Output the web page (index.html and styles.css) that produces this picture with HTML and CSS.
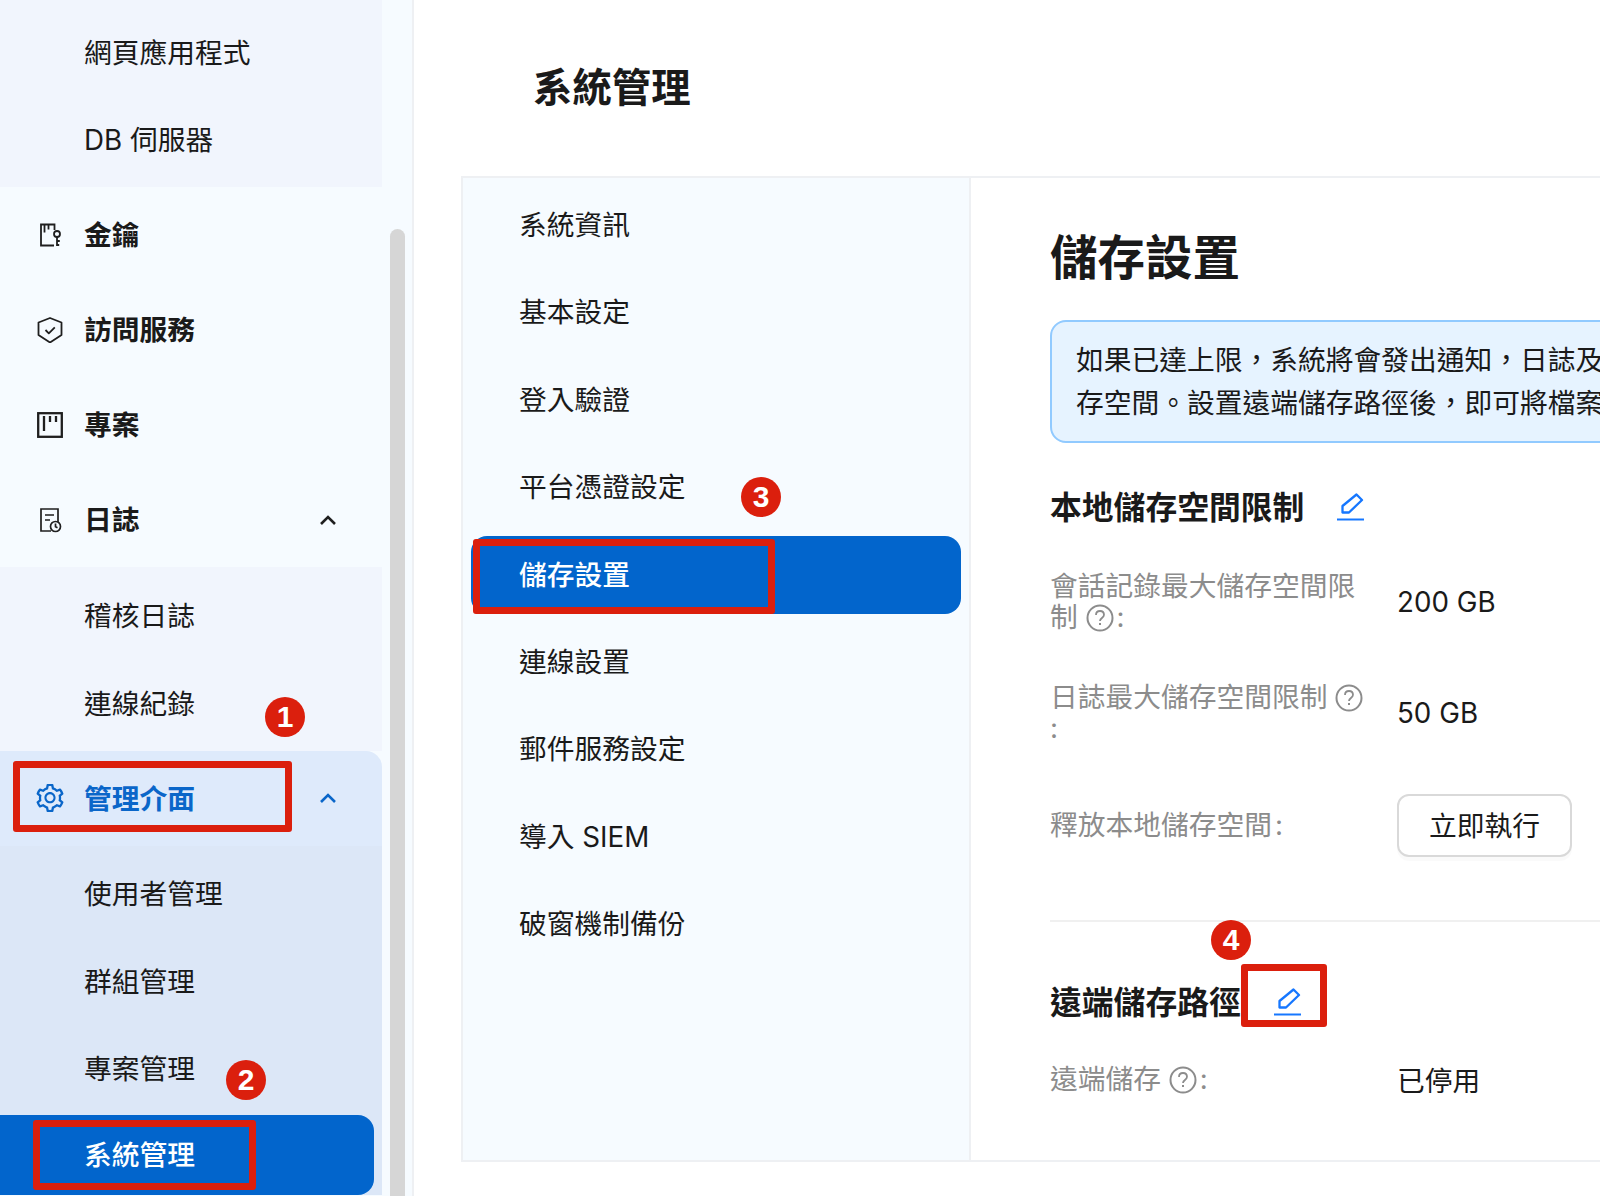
FILE: index.html
```html
<!DOCTYPE html>
<html lang="zh-Hant">
<head>
<meta charset="utf-8">
<title>系統管理</title>
<link rel="stylesheet" href="styles.css">
</head>
<body>
<div class="page">
  <aside class="sidebar">
    <nav class="nav">
      <div class="sub sub-first">
        <div class="sub-item">網頁應用程式</div>
        <div class="sub-item">DB 伺服器</div>
      </div>
      <div class="top-item">
        <svg class="icon" viewBox="0 0 26 26" fill="none" stroke="#1f1f1f" stroke-width="1.8"><path d="M17.500 8V2.500H4v21h13"/><path d="M7.500 2.500v8M11.500 2.500v5"/><circle cx="20" cy="12" r="3"/><path d="M20 15v9M20 19h2.800M20 23h2.200"/></svg>
        <span class="top-label">金鑰</span>
      </div>
      <div class="top-item">
        <svg class="icon" viewBox="0 0 26 26" fill="none" stroke="#1f1f1f" stroke-width="1.800" stroke-linejoin="round"><path d="M13 1 24.500 5.500v12.500L13 25.500 1.500 18V5.500z"/><path d="m8.500 13 3.300 3.300 6-6"/></svg>
        <span class="top-label">訪問服務</span>
      </div>
      <div class="top-item">
        <svg class="icon" viewBox="0 0 26 26" fill="none" stroke="#1f1f1f" stroke-width="2.300"><rect x="1.200" y="1.200" width="23.600" height="23.600"/><path d="M7 4v15M13 4v6M19 4v6"/></svg>
        <span class="top-label">專案</span>
      </div>
      <div class="top-item">
        <svg class="icon" viewBox="0 0 26 26" fill="none" stroke="#1f1f1f" stroke-width="1.700"><path d="M14 24H4V2h17v13"/><path d="M8 8h9M8 13h5"/><circle cx="18.500" cy="19.500" r="5"/><path d="M18.500 16.500v3.200l2 1"/></svg>
        <span class="top-label">日誌</span>
        <svg class="chevron" viewBox="0 0 18 12" fill="none" stroke="#1f1f1f" stroke-width="2.600"><path d="m2 10 7-7 7 7"/></svg>
      </div>
      <div class="sub sub-logs">
        <div class="sub-item">稽核日誌</div>
        <div class="sub-item">連線紀錄</div>
      </div>
      <div class="group">
        <div class="top-item top-active">
          <svg class="icon gear" viewBox="70 70 884 884" fill="#0a66c9"><path d="M924.8 625.7l-65.5-56c3.100-19 4.700-38.400 4.700-57.800s-1.600-38.800-4.700-57.800l65.500-56a32.030 32.030 0 0 0 9.300-35.200l-.9-2.600a443.740 443.740 0 0 0-79.700-137.900l-1.800-2.100a32.120 32.120 0 0 0-35.100-9.500l-81.300 28.900c-30-24.600-63.500-44-99.700-57.600l-15.700-85a32.050 32.050 0 0 0-25.800-25.700l-2.700-.5c-52.100-9.400-106.900-9.400-159 0l-2.700.5a32.050 32.050 0 0 0-25.800 25.700l-15.800 85.400a351.860 351.860 0 0 0-99 57.400l-81.900-29.100a32 32 0 0 0-35.100 9.500l-1.800 2.100a446.020 446.020 0 0 0-79.700 137.900l-.9 2.600c-4.500 12.500-.8 26.500 9.300 35.200l66.300 56.600c-3.100 18.800-4.600 38-4.600 57.100 0 19.200 1.500 38.400 4.600 57.100L99 625.500a32.030 32.030 0 0 0-9.300 35.200l.9 2.600c18.100 50.400 44.900 96.900 79.700 137.900l1.800 2.100a32.120 32.120 0 0 0 35.100 9.500l81.900-29.100c29.800 24.500 63.100 43.900 99 57.400l15.800 85.400a32.050 32.050 0 0 0 25.800 25.700l2.700.5a449.400 449.400 0 0 0 159 0l2.700-.5a32.050 32.050 0 0 0 25.800-25.700l15.700-85a350 350 0 0 0 99.700-57.600l81.300 28.900a32 32 0 0 0 35.100-9.500l1.800-2.100c34.800-41.100 61.600-87.500 79.700-137.900l.9-2.600c4.500-12.300.8-26.300-9.300-35zM788.300 465.900c2.500 15.100 3.800 30.600 3.800 46.100s-1.300 31-3.800 46.100l-6.600 40.100 74.700 63.900a370.030 370.030 0 0 1-42.600 73.600L721 702.800l-31.400 25.800c-23.900 19.600-50.500 35-79.300 45.800l-38.100 14.300-17.900 97a377.500 377.500 0 0 1-85 0l-17.900-97.200-37.800-14.500c-28.500-10.800-55-26.200-78.700-45.700l-31.400-25.900-93.400 33.200c-17-22.900-31.200-47.600-42.600-73.600l75.500-64.500-6.500-40c-2.400-14.900-3.700-30.300-3.700-45.500 0-15.300 1.200-30.600 3.700-45.500l6.500-40-75.500-64.500c11.300-26.100 25.600-50.700 42.600-73.600l93.400 33.200 31.400-25.900c23.700-19.500 50.200-34.900 78.700-45.700l37.900-14.300 17.900-97.200c28.100-3.200 56.800-3.200 85 0l17.900 97 38.100 14.300c28.700 10.800 55.400 26.200 79.300 45.800l31.400 25.800 92.800-32.900c17 22.900 31.200 47.600 42.600 73.600L781.800 426l6.500 39.900zM512 326c-97.200 0-176 78.800-176 176s78.800 176 176 176 176-78.800 176-176-78.800-176-176-176zm79.200 255.200A111.600 111.600 0 0 1 512 614c-29.900 0-58-11.700-79.200-32.800A111.600 111.600 0 0 1 400 502c0-29.900 11.700-58 32.800-79.200C454 401.600 482.100 390 512 390c29.900 0 58 11.600 79.200 32.800A111.600 111.600 0 0 1 624 502c0 29.900-11.700 58-32.800 79.200z"/></svg>
          <span class="top-label">管理介面</span>
          <svg class="chevron" viewBox="0 0 18 12" fill="none" stroke="#0a66c9" stroke-width="2.600"><path d="m2 10 7-7 7 7"/></svg>
        </div>
        <div class="sub sub-blue">
          <div class="sub-item">使用者管理</div>
          <div class="sub-item">群組管理</div>
          <div class="sub-item">專案管理</div>
          <div class="sub-item sub-current">系統管理</div>
        </div>
      </div>
    </nav>
    <div class="scroll"><div class="thumb"></div></div>
  </aside>

  <main class="main">
    <div class="page-title">系統管理</div>
    <section class="panel">
      <div class="menu">
        <div class="menu-item">系統資訊</div>
        <div class="menu-item">基本設定</div>
        <div class="menu-item">登入驗證</div>
        <div class="menu-item">平台憑證設定</div>
        <div class="menu-item menu-current">儲存設置</div>
        <div class="menu-item">連線設置</div>
        <div class="menu-item">郵件服務設定</div>
        <div class="menu-item">導入 SIEM</div>
        <div class="menu-item">破窗機制備份</div>
      </div>
      <div class="content">
        <h1 class="heading">儲存設置</h1>
        <div class="alert">
          <div>如果已達上限&#xFF0C;系統將會發出通知&#xFF0C;日誌及</div>
          <div>存空間。設置遠端儲存路徑後&#xFF0C;即可將檔案</div>
        </div>
        <div class="section-title section-first">
          <span class="section-text">本地儲存空間限制</span>
          <svg class="edit" viewBox="0 0 27 28" fill="none" stroke="#1677ff" stroke-width="2.300"><path d="M19.500 1.500 25 7 12 19.500H5.500V13z" stroke-linejoin="round"/><path d="M0 26.500h27" stroke-width="2"/></svg>
        </div>
        <div class="rows">
          <div class="row">
            <div class="label">會話記錄最大儲存空間限制 <svg class="help" viewBox="0 0 28 28" fill="none" stroke="#8c8c8c" stroke-width="2"><circle cx="14" cy="14" r="12.500"/><path d="M10 11c0-2.500 1.800-4 4-4s4 1.500 4 3.800c0 3-4 3.400-4 6.200" stroke-width="1.800"/><path d="M14 19v2" stroke-width="2"/></svg><span class="colon">:</span></div>
            <div class="value">200 GB</div>
          </div>
          <div class="row">
            <div class="label">日誌最大儲存空間限制 <svg class="help" viewBox="0 0 28 28" fill="none" stroke="#8c8c8c" stroke-width="2"><circle cx="14" cy="14" r="12.500"/><path d="M10 11c0-2.500 1.800-4 4-4s4 1.500 4 3.800c0 3-4 3.400-4 6.200" stroke-width="1.800"/><path d="M14 19v2" stroke-width="2"/></svg> :</div>
            <div class="value">50 GB</div>
          </div>
          <div class="row">
            <div class="label">釋放本地儲存空間<span class="colon">:</span></div>
            <button class="btn">立即執行</button>
          </div>
        </div>
        <div class="divider"></div>
        <div class="section-title">
          <span class="section-text">遠端儲存路徑</span>
          <svg class="edit" viewBox="0 0 27 28" fill="none" stroke="#1677ff" stroke-width="2.300"><path d="M19.500 1.500 25 7 12 19.500H5.500V13z" stroke-linejoin="round"/><path d="M0 26.500h27" stroke-width="2"/></svg>
        </div>
        <div class="rows rows-last">
          <div class="row">
            <div class="label">遠端儲存 <svg class="help" viewBox="0 0 28 28" fill="none" stroke="#8c8c8c" stroke-width="2"><circle cx="14" cy="14" r="12.500"/><path d="M10 11c0-2.500 1.800-4 4-4s4 1.500 4 3.800c0 3-4 3.400-4 6.200" stroke-width="1.800"/><path d="M14 19v2" stroke-width="2"/></svg><span class="colon">:</span></div>
            <div class="value">已停用</div>
          </div>
        </div>
      </div>
    </section>
  </main>

  <div class="mark mark-1"></div>
  <div class="mark mark-2"></div>
  <div class="mark mark-3"></div>
  <div class="mark mark-4"></div>
  <div class="badge badge-1">1</div>
  <div class="badge badge-2">2</div>
  <div class="badge badge-3">3</div>
  <div class="badge badge-4">4</div>
</div>
</body>
</html>
```

FILE: styles.css
```css
* { box-sizing: border-box; }
html, body { margin: 0; padding: 0; }
body {
  width: 1600px;
  height: 1196px;
  overflow: hidden;
  background: #fff;
  color: #1a1a1a;
  font-family: Inter, "Noto Sans CJK TC", sans-serif;
  font-size: 27.75px;
}
.page {
  position: relative;
  display: flex;
  width: 1600px;
  height: 1196px;
  overflow: hidden;
}

/* sidebar */
.sidebar {
  display: flex;
  flex: none;
  width: 414px;
  height: 1196px;
  background: #f6fbff;
  border-right: 2px solid #eef0f3;
  overflow: hidden;
}
.nav { flex: none; width: 382px; }
.scroll { flex: none; width: 30px; padding-left: 8px; padding-top: 229px; }
.thumb {
  width: 15px;
  height: 1000px;
  background: #d6d6d6;
  border-radius: 8px 8px 0 0;
}
.sub { background: #f1f5fd; }
.sub-first { padding: 7px 0 5px; }
.sub-logs { padding: 3.5px 0 5px; }
.sub-item {
  display: flex;
  align-items: center;
  height: 87.5px;
  padding-left: 84px;
}
.top-item {
  display: flex;
  align-items: center;
  height: 95px;
  padding: 0 37px;
}
.icon { flex: none; width: 26px; height: 26px; margin-right: 21px; }
.gear { width: 28px; height: 28px; margin-left: -1px; margin-right: 20px; }
.top-label { flex: 1; font-weight: 600; padding-bottom: 3px; }
.chevron { flex: none; width: 18px; height: 12px; margin-right: 8px; }
.group { background: #deeafb; border-radius: 0 16px 0 0; overflow: hidden; }
.top-active { color: #0a66c9; }
.sub-blue { background: #dce7f7; padding: 3px 0 0; }
.sub-item.sub-current {
  margin-top: 4px;
  margin-right: 8px;
  height: 80px;
  padding-bottom: 4px;
  background: #0265cc;
  color: #fff;
  font-weight: 500;
  border-radius: 0 16px 16px 0;
}

/* main */
.main { flex: 1; min-width: 0; padding-left: 47px; }
.page-title {
  display: flex;
  align-items: center;
  height: 176px;
  padding: 0 0 8px 72px;
  font-size: 39.4px;
  font-weight: 700;
}
.panel {
  display: flex;
  height: 986px;
  border: 2px solid #eef0f3;
  border-right: 0;
}
.menu {
  flex: none;
  width: 508px;
  padding: 8px 8px 0;
  background: #f6fbff;
  border-right: 2px solid #eef0f3;
}
.menu-item {
  display: flex;
  align-items: center;
  height: 78px;
  margin-bottom: 9.4px;
  padding: 0 0 4px 48px;
  border-radius: 16px;
}
.menu-current { background: #0265cc; color: #fff; font-weight: 500; }
.content { flex: 1; min-width: 0; padding: 49px 0 0 79px; overflow: hidden; }
.heading {
  margin: 0;
  height: 60px;
  line-height: 62px;
  font-size: 47.5px;
  font-weight: 700;
}
.alert {
  width: 700px;
  margin-top: 33px;
  padding: 17px 24px 16px;
  background: #e6f3ff;
  border: 2px solid #91caff;
  border-radius: 16px;
  line-height: 43px;
  white-space: nowrap;
}
.section-title {
  display: flex;
  align-items: center;
  height: 44px;
  margin-top: 58px;
  font-size: 31.8px;
  font-weight: 700;
}
.section-first { margin-top: 42px; }
.section-text { padding-bottom: 4px; }
.edit { flex: none; width: 27px; height: 28px; margin-left: 33px; }
.rows { display: flex; flex-direction: column; gap: 49px; margin-top: 42px; }
.rows-last { margin-top: 35px; }
.row { display: flex; align-items: center; gap: 29px; }
.label {
  flex: none;
  width: 318px;
  color: #8c8c8c;
  line-height: 31px;
}
.colon { margin-left: 3px; }
.help { width: 28px; height: 28px; vertical-align: -5px; }
.value { color: #1a1a1a; }
.btn {
  width: 175px;
  height: 63px;
  margin-top: 1px;
  padding: 0 0 4px;
  font: inherit;
  color: #1a1a1a;
  background: #fff;
  border: 2px solid #d9d9d9;
  border-radius: 12px;
  box-shadow: 0 4px 0 rgba(0, 0, 0, .02);
}
.divider { height: 2px; margin-top: 63px; background: #f0f0f0; }

/* tutorial annotations */
.mark {
  position: absolute;
  border: 7px solid #db1f0d;
  border-radius: 3px;
}
.mark-1 { left: 13px; top: 761px; width: 279px; height: 71px; }
.mark-2 { left: 33px; top: 1120px; width: 223px; height: 70px; }
.mark-3 { left: 473px; top: 539px; width: 302px; height: 75px; }
.mark-4 { left: 1241px; top: 964px; width: 86px; height: 63px; }
.badge {
  position: absolute;
  width: 40px;
  height: 40px;
  border-radius: 50%;
  background: #db1f0d;
  color: #fff;
  font-family: "Liberation Sans", sans-serif;
  font-size: 30px;
  font-weight: 700;
  line-height: 40px;
  text-align: center;
}
.badge-1 { left: 265px; top: 697px; }
.badge-2 { left: 226px; top: 1060px; }
.badge-3 { left: 741px; top: 477px; }
.badge-4 { left: 1211px; top: 920px; }
```
